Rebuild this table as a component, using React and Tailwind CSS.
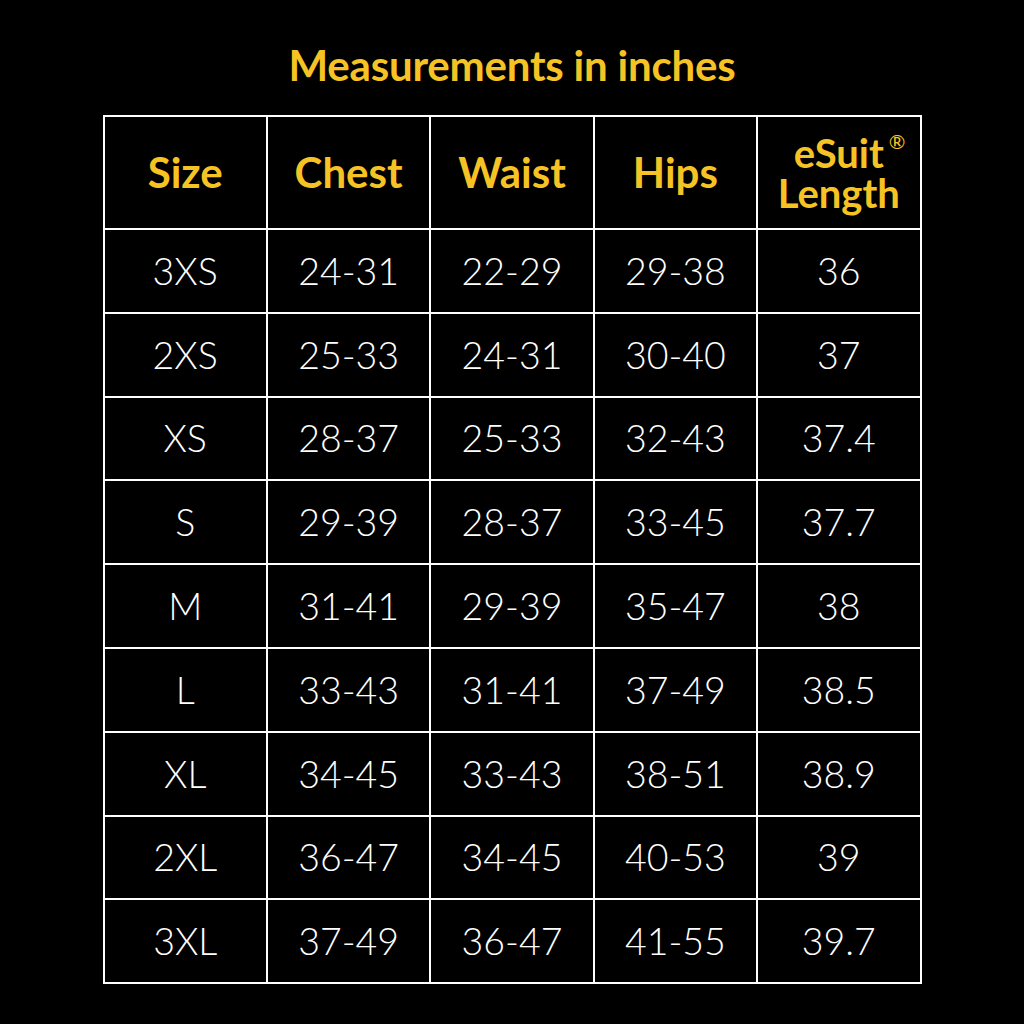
export default function App() {
  const rows = [
    ["3XS", "24-31", "22-29", "29-38", "36"],
    ["2XS", "25-33", "24-31", "30-40", "37"],
    ["XS", "28-37", "25-33", "32-43", "37.4"],
    ["S", "29-39", "28-37", "33-45", "37.7"],
    ["M", "31-41", "29-39", "35-47", "38"],
    ["L", "33-43", "31-41", "37-49", "38.5"],
    ["XL", "34-45", "33-43", "38-51", "38.9"],
    ["2XL", "36-47", "34-45", "40-53", "39"],
    ["3XL", "37-49", "36-47", "41-55", "39.7"],
  ];
  const heads = ["Size", "Chest", "Waist", "Hips"];
  return (
    <div className="w-[1024px] h-[1024px] bg-black flex flex-col items-center" style={{ fontFamily: "Lato, 'Noto Sans', sans-serif" }}>
      <h1 className="mt-[39px] text-[42px] leading-[52px] font-bold text-[#f6c324] tracking-[-0.2px]">Measurements in inches</h1>
      <table className="mt-[24px] w-[819px] table-fixed border-collapse">
        <thead>
          <tr className="h-[113px]">
            {heads.map((h) => (
              <th key={h} className="border-2 border-white text-[#f6c324] text-[42px] font-bold text-center align-middle">{h}</th>
            ))}
            <th className="border-2 border-white text-[#f6c324] text-[40px] leading-[40px] font-bold text-center align-middle">
              <span className="relative inline-block">eSuit<span className="absolute left-full ml-[5px] top-[-2px] text-[20px] leading-[20px] font-normal">®</span></span>
              <br />Length
            </th>
          </tr>
        </thead>
        <tbody>
          {rows.map((r) => (
            <tr key={r[0]} className="h-[83.8px]">
              {r.map((c, i) => (
                <td key={i} className="border-2 border-white text-white text-[37.5px] font-light text-center align-middle">{c}</td>
              ))}
            </tr>
          ))}
        </tbody>
      </table>
    </div>
  );
}
